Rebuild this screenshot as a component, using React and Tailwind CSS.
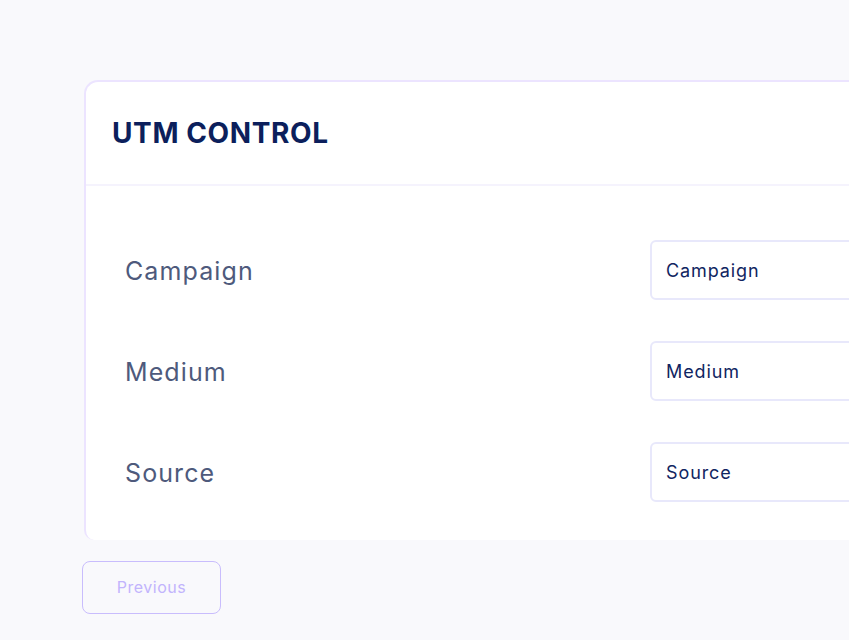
import React from 'react';

const fields = ['Campaign', 'Medium', 'Source'];

function App() {
    return (
        <div className="min-h-screen w-full overflow-hidden bg-[#f9f9fc] font-['Inter',sans-serif]">
            <div className="pt-[80px] pl-[84px]">
                <div className="w-[900px] bg-white rounded-tl-[14px] rounded-bl-[10px] border-t-2 border-l-2 border-[#ece4ff]">
                    <div className="h-[104px] flex items-center pl-[26px] border-b-2 border-[#f5f3fd]">
                        <h1 className="text-[28px] font-bold tracking-[0.6px] text-[#0c1f5c]">UTM CONTROL</h1>
                    </div>
                    <div className="pt-[54px] pb-[38px] space-y-[41px]">
                        {fields.map((f) => (
                            <div key={f} className="flex items-center">
                                <div className="w-[564px] pl-[39px] pt-[4px] text-[25px] tracking-[1.1px] text-[#4e5a7c]">{f}</div>
                                <div className="flex-1 h-[60px] flex items-center pl-[14px] border-2 border-[#e8e8fb] rounded-[6px] text-[18px] tracking-[0.9px] text-[#102561]">
                                    {f}
                                </div>
                            </div>
                        ))}
                    </div>
                </div>
            </div>
            <div className="pl-[82px] pt-[21px]">
                <button className="w-[139px] h-[53px] pb-[2px] rounded-[8px] border border-[#c9bdfd] text-[16px] tracking-[0.5px] text-[#c2b4fc]">
                    Previous
                </button>
            </div>
        </div>
    );
}

export default App;
